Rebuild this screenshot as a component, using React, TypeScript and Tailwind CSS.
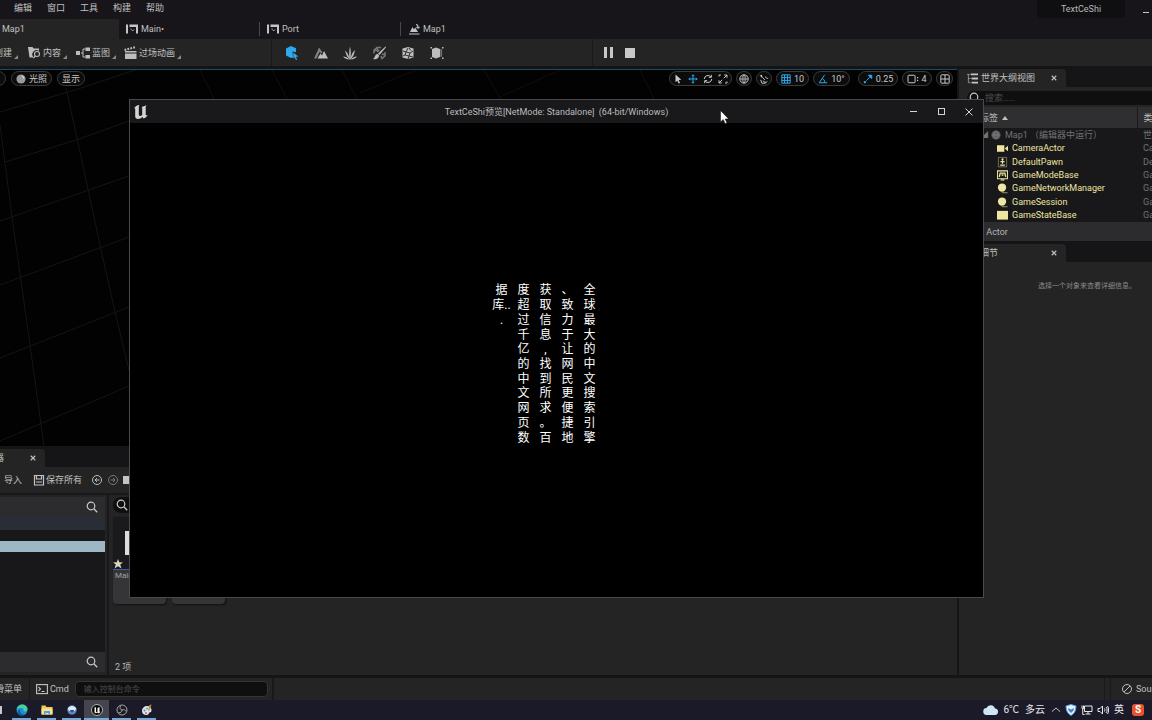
import React from "react";

const cx = (...parts: (string | false | undefined)[]) => parts.filter(Boolean).join(" ");

type SvgProps = { size?: string; box?: string; className?: string; children: React.ReactNode };

function Svg({ size = "size-3", box = "0 0 24 24", className, children }: SvgProps) {
  return (
    <svg viewBox={box} className={cx(size, "shrink-0", className)} fill="none" stroke="currentColor" strokeWidth={2} aria-hidden="true">
      {children}
    </svg>
  );
}

const WidgetIcon = () => (
  <Svg box="0 0 12 12" className="text-[#c4c4c4]">
    <path d="M0 1.500h2v9H0zM3.500 1.500H12v2.500H3.500zM10 4h2v6.500h-2z" fill="currentColor" stroke="none" />
    <path d="M4.500 6h1M5.500 6.500l1.200 1.500L8 6.500" strokeWidth={1} opacity=".8" />
  </Svg>
);

const LevelIcon = () => (
  <Svg box="0 0 12 12" className="text-[#c4c4c4]">
    <path d="M2 9l2.500-5L6 6.500 7.200 4.500 10 9z" fill="currentColor" stroke="none" />
    <path d="M1 11h10.500M8 1.500c1.500 0 2 1 2 2.500M8.500 4l1.500 1.200L11.500 4" strokeWidth={1.100} />
  </Svg>
);

const SearchIcon = ({ className }: { className?: string }) => (
  <Svg box="0 0 12 12" className={cx("text-[#c8c8c8]", className)}>
    <circle cx="5" cy="5" r="3.800" strokeWidth={1.200} />
    <path d="M7.800 7.800L11.200 11.200" strokeWidth={1.300} />
  </Svg>
);

const CloseIcon = ({ size = "size-[6px]" }: { size?: string }) => (
  <Svg box="0 0 8 8" size={size}>
    <path d="M1 1l6 6M7 1L1 7" strokeWidth={1.500} />
  </Svg>
);

const UnrealGlyph = ({ size }: { size: string }) => (
  <Svg box="0 0 16 16" size={size}>
    <path
      d="M1 4.500C2 2.500 4 1.200 6.500 1 5.900 1.600 5.800 2.200 5.800 3v7.600c0 .9.500 1.400 1.200 1.400.8 0 1.600-.5 2.200-1.100V4.200c0-.7-.3-.9-.9-1 1.500-.5 3.500-1 5.200-2.200-.6.9-.8 1.600-.8 2.600v7.200c0 .6.500.7 1.900.1-.8 1.700-2.300 3-4 3.500L9.300 12.900c-1 1.200-2.400 2-4.300 2-1.800 0-2.800-1-2.800-2.700V4.700c0-.6-.4-.7-1.200-.2z"
      fill="currentColor"
      stroke="none"
    />
  </Svg>
);

const Corner = () => (
  <Svg box="0 0 4 4" size="size-1" className="mt-2 text-[#8a8a8a]">
    <path d="M4 0v4H0z" fill="currentColor" stroke="none" />
  </Svg>
);

function TopMenu() {
  return (
    <header className="flex h-[19px] items-start justify-between bg-[#17151a]">
      <nav className="flex h-4 items-center gap-[15px] pl-[14px]">
        {["编辑", "窗口", "工具", "构建", "帮助"].map((m) => (
          <button key={m}>{m}</button>
        ))}
      </nav>
      <div className="flex items-start">
        <div className="flex h-[18px] w-[88px] items-center justify-center rounded-b bg-[#0f0f11] text-[#b8b8b8]">TextCeShi</div>
        <button aria-label="最小化" className="ml-[18px] flex h-6 w-[9px] items-center">
          <span className="h-px w-[6px] bg-[#c8c8c8]" />
        </button>
      </div>
    </header>
  );
}

function AssetTabs() {
  return (
    <div className="flex h-5 bg-[#17151a]">
      <button className="flex w-[119px] items-center bg-[#242424] pl-[2px]">Map1</button>
      {[
        { label: "Main", icon: <WidgetIcon />, dirty: true },
        { label: "Port", icon: <WidgetIcon />, dirty: false },
        { label: "Map1", icon: <LevelIcon />, dirty: false },
      ].map((t, i) => (
        <div key={i} className="flex items-center">
          <button className="flex w-[141px] items-center gap-[3px] pl-[7px]">
            {t.icon}
            <span>
              {t.label}
              {t.dirty && "•"}
            </span>
          </button>
          {i < 2 && <span className="-ml-px h-[14px] w-px bg-[#4a484d]" />}
        </div>
      ))}
    </div>
  );
}

const contentIcon = (
  <Svg box="0 0 13 13" size="size-[13px]" className="text-[#bdbdbd]">
    <path d="M0 1h4.500l1.200 1.500H11V5a4 4 0 0 0-5 6.500H1.500z" fill="currentColor" stroke="none" />
    <circle cx="9" cy="8" r="2.500" strokeWidth={1.100} />
    <path d="M7.300 9.900L5.500 12.200" strokeWidth={1.200} />
  </Svg>
);

const blueprintIcon = (
  <Svg box="0 0 14 12" size="h-3 w-[14px]" className="text-[#bdbdbd]">
    <path d="M0 4h4v4H0zM9.500.5H14V4H9.500zM9.500 8H14v3.500H9.500z" fill="currentColor" stroke="none" />
    <path d="M9.500 2H7v8h2.500M5 6h2" strokeWidth={1} />
  </Svg>
);

const clapperIcon = (
  <Svg box="0 0 13 13" size="size-[13px]" className="text-[#bdbdbd]">
    <path d="M1 5h11.500v1.500H1zM1 7.500h11.500V13H1z" fill="currentColor" stroke="none" />
    <path d="M0.500 4L12 1" strokeWidth={2} strokeDasharray="1.800 1.200" />
  </Svg>
);

const modeIcons: { name: string; active?: boolean; icon: React.ReactNode }[] = [
  {
    name: "选择",
    active: true,
    icon: (
      <g stroke="none" fill="currentColor">
        <path d="M6 0l5 2.200v4L7.500 5.500l.5 6L6 12 1 9.500v-7z" />
        <path d="M8.300 6.500l5 4-2.400.3 1.300 2.600-1.300.6-1.200-2.700-1.400 1.500z" />
      </g>
    ),
  },
  {
    name: "地形",
    icon: (
      <g stroke="none" fill="currentColor">
        <path d="M0 12.500L5 1.500l3.500 5-1 1-2-1.500-3 6.500z" opacity=".6" />
        <path d="M3.500 12.500L6.500 7.500l1.500 2L10 5l4 7.500z" />
      </g>
    ),
  },
  {
    name: "植被",
    icon: (
      <path
        d="M6.500 13.500C6 9 6 5 7 0.500 8 5 8 9 7.500 13.500zM6.500 13.500C6 9.500 4.500 6.500 2 4.500c1 3.500 2 6.500 4.500 9zM7.500 13.500C8 9.500 9.500 6 12 4c-.5 3.500-2 7-4.500 9.500zM6 13.500C4.500 11.500 2.500 10.500 0 10.500c1.500 1.800 3.500 2.800 6 3zM8 13.500c1.500-2 3.500-3 6-3-1.500 1.800-3.500 2.800-6 3z"
        fill="currentColor"
        stroke="none"
      />
    ),
  },
  {
    name: "网格体绘制",
    icon: (
      <g>
        <path d="M2 7.500V4l3-2.500h4M2.500 4.500h5M5 1.500L6 6M9 10l1 2.500L13 10V6M10 8l3 1" strokeWidth={1.500} opacity=".55" />
        <path d="M13.500.5L14 1.200 7.500 9 6 7.500z" fill="currentColor" stroke="none" />
        <path d="M5.500 7.800L7.200 9.500c-.5 3-3 4.200-6.200 3.500C3.200 12 2.500 8.500 5.500 7.800z" fill="currentColor" stroke="none" />
      </g>
    ),
  },
  {
    name: "破裂",
    icon: (
      <g>
        <path d="M1.500 2.500L7 1l5.500 1.500v9L7 13l-5.500-1.500z" fill="currentColor" stroke="none" />
        <path d="M2 5l3 1 2-4M5 6l-1 3-2 1M5 6l4 1 3-2M9 7l-1 3 4 1M4 9l4 1-1 3M8 2l2 2.500" stroke="#242424" strokeWidth={0.900} />
      </g>
    ),
  },
  {
    name: "笔刷编辑",
    icon: (
      <g>
        <path d="M2 3l4-1.500L10 3v8l-4 1.500L2 11z" fill="currentColor" stroke="none" />
        <path d="M11.200 3.200v7.600" strokeWidth={1.800} opacity=".5" />
        <path d="M.5 1H2v1.500H.5zM12 1h1.500v1.500H12zM.5 11.500H2V13H.5zM12 11.500h1.500V13H12z" fill="currentColor" stroke="none" />
      </g>
    ),
  },
];

function Toolbar() {
  return (
    <div className="flex h-[27px] bg-[#242424]">
      <div className="flex w-[272px] items-center border-r border-[#19191b]">
        <button className="-ml-[6px] flex items-center gap-[2px]">
          创建
          <Corner />
        </button>
        <button className="ml-[10px] flex items-center gap-[2px]">
          {contentIcon}
          内容
          <Corner />
        </button>
        <button className="ml-[9px] flex items-center gap-[2px]">
          {blueprintIcon}
          蓝图
          <Corner />
        </button>
        <button className="ml-[8px] flex items-center gap-[2px]">
          {clapperIcon}
          过场动画
          <Corner />
        </button>
      </div>
      <div className="flex w-[321px] items-center gap-[15px] border-r border-[#19191b] pl-[13px]">
        {modeIcons.map((m) => (
          <button key={m.name} aria-label={m.name} className={m.active ? "text-[#2fa8f0]" : "text-[#bdbdbd]"}>
            <Svg box="0 0 14 14" size="size-[14px]">
              {m.icon}
            </Svg>
          </button>
        ))}
      </div>
      <div className="flex items-center gap-3 pl-[11px] text-[#c8c8c8]">
        <button aria-label="暂停" className="flex w-[9px] justify-between">
          <span className="h-[11px] w-[3px] bg-current" />
          <span className="h-[11px] w-[3px] bg-current" />
        </button>
        <button aria-label="停止" className="size-[10px] bg-current" />
      </div>
    </div>
  );
}

function Pill({ className, label, children }: { className?: string; label?: string; children: React.ReactNode }) {
  return (
    <button
      aria-label={label}
      className={cx("flex h-[15px] items-center justify-center rounded-full border border-[#3c3c3c] bg-[#0c0c0c] text-[#c8c8c8]", className)}
    >
      {children}
    </button>
  );
}

const Small = ({ className, children }: { className?: string; children: React.ReactNode }) => (
  <Svg box="0 0 12 12" size="size-[10px]" className={className}>
    <g strokeWidth={1.200}>{children}</g>
  </Svg>
);

function ViewportBar() {
  return (
    <div className="relative flex items-center justify-between pr-1 pt-px">
      <div className="flex items-center gap-[5px]">
        <Pill className="-ml-[15px] w-[21px]" label="透视">
          {""}
        </Pill>
        <Pill className="w-[41px] gap-[3px]">
          <Small>
            <circle cx="6" cy="6" r="5.500" fill="#9a9a9a" stroke="none" />
            <path d="M7 2.500a3 3 0 0 1 2.500 3" stroke="#e6e6e6" />
          </Small>
          光照
        </Pill>
        <Pill className="w-[28px]">显示</Pill>
      </div>
      <div className="flex items-center gap-1">
        <div className="flex h-[15px] w-[63px] items-center justify-between rounded-full border border-[#3c3c3c] bg-[#0c0c0c] px-[3px] text-[#c8c8c8]">
          <button aria-label="选择">
            <Small>
              <path d="M3 .5l7 6.500-3.200.3 1.700 3.400-1.800.8L5.200 8 3 10z" fill="currentColor" stroke="none" />
            </Small>
          </button>
          <button aria-label="移动" className="text-[#2fa8f0]">
            <Small>
              <path d="M6 1v10M1 6h10M4.500 2.500L6 1l1.500 1.500M4.500 9.500L6 11l1.500-1.500M2.500 4.500L1 6l1.500 1.500M9.500 4.500L11 6 9.500 7.500" />
            </Small>
          </button>
          <button aria-label="旋转">
            <Small>
              <path d="M1.500 6A4.500 4.500 0 0 1 9.500 3.500M10.500 6a4.500 4.500 0 0 1-8 2.500M10 1v3H7M2 11V8h3" />
            </Small>
          </button>
          <button aria-label="缩放">
            <Small>
              <path d="M7.500 1.200h3.300V4.500M10.800 1.200L7 5M4.500 10.800H1.200V7.500M1.200 10.800L5 7M1.200 3V1.200H3.500M10.800 9v1.800H8.500" />
            </Small>
          </button>
        </div>
        <Pill className="w-4" label="世界坐标">
          <Small>
            <circle cx="6" cy="6" r="5" />
            <path d="M1 6h10M6 1v10M6 1C3 3 3 9 6 11M6 1c3 2 3 8 0 10" strokeWidth={0.900} />
          </Small>
        </Pill>
        <Pill className="w-4" label="表面对齐">
          <Small>
            <path d="M1 2l3 1M3 1v3M4 4l3 3M5 8a3 3 0 0 0 5 1M8 3a2 2 0 0 0 3 2M2 7l1.500 4H8" />
          </Small>
        </Pill>
        <Pill className="w-[33px] gap-[3px]">
          <Small className="text-[#2fa8f0]">
            <path d="M1 1h10v10H1zM4.300 1v10M7.700 1v10M1 4.300h10M1 7.700h10" />
          </Small>
          10
        </Pill>
        <Pill className="w-[37px] gap-[3px]">
          <Small className="text-[#2fa8f0]">
            <path d="M8 1L1.500 10.500H11M5 5.500c2 .5 3.200 2.500 3.200 5" />
          </Small>
          10°
        </Pill>
        <Pill className="ml-1 w-10 gap-[3px]">
          <Small className="text-[#2fa8f0]">
            <path d="M4 8l4-4M6.500 1.500h4v4z" fill="currentColor" />
            <path d="M1 8.500h2.500V11H1z" fill="currentColor" stroke="none" />
          </Small>
          0.25
        </Pill>
        <Pill className="w-[30px] gap-[2px]">
          <Svg box="0 0 14 12" size="h-[10px] w-3">
            <rect x="1" y="1.500" width="8.500" height="9" rx="1" strokeWidth={1.200} />
            <path d="M12.500 3.500v1.500M12.500 7v1.500" strokeWidth={1.500} />
          </Svg>
          4
        </Pill>
        <Pill className="w-[17px]" label="布局">
          <Small>
            <rect x="1" y="1" width="10" height="10" rx="1" />
            <path d="M6 1v10M1 6h10" />
          </Small>
        </Pill>
      </div>
    </div>
  );
}

function Viewport() {
  return (
    <section className="relative min-h-0 flex-1 overflow-hidden border-t border-[#1d4a60] bg-[#020202]">
      <svg className="absolute inset-0 size-full" viewBox="0 70 957 376" preserveAspectRatio="xMinYMin slice" fill="none" stroke="#151515" aria-hidden="true">
        <path d="M0 125L12 217 30 345 44 446M66 88L77 138 100 245 115 312 129 370M0 112L75 90 135 70M5 162L76 140 129 121M0 221L129 176M0 285L129 237M0 358L129 307M0 441L129 386" />
        <path d="M200 70l14 29M272 70l15 29M342 70l15 29M360 93l56-23M484 70l17 29M500 97l60-27M640 70l14 29" stroke="#120f0c" />
      </svg>
      <ViewportBar />
    </section>
  );
}

function PanelTab({ className, children }: { className?: string; children: React.ReactNode }) {
  return (
    <div className="flex h-[18px] shrink-0 bg-[#151518]">
      <div className={cx("flex items-center rounded-tr bg-[#242424]", className)}>{children}</div>
    </div>
  );
}

function ContentBrowser() {
  return (
    <section className="flex h-[229px] flex-col border-t-3 border-[#151518] bg-[#242424]">
      <PanelTab className="w-[45px] justify-between pr-[9px]">
        <span className="-ml-[5px]">器</span>
        <button aria-label="关闭">
          <CloseIcon />
        </button>
      </PanelTab>
      <div className="flex h-[26px] shrink-0 items-center">
        <button className="-ml-[9px] flex items-center gap-[3px]">
          <Svg size="size-[10px]">
            <path d="M12 3v12M20 4v16H4V4" />
          </Svg>
          导入
        </button>
        <button className="ml-[11px] flex items-center gap-px">
          <Svg box="0 0 12 12" className="text-[#c4c4c4]">
            <path d="M1.500 1.500h9v9.500h-9zM3.500 1.500V5h5V1.500M3 8h6" strokeWidth={1.200} />
          </Svg>
          保存所有
        </button>
        <button aria-label="后退" className="ml-[9px]">
          <Svg size="size-3">
            <circle cx="12" cy="12" r="9" />
            <path d="M17 12H8M12 8l-4 4 4 4" />
          </Svg>
        </button>
        <button aria-label="前进" className="ml-1 text-[#777777]">
          <Svg size="size-3">
            <circle cx="12" cy="12" r="9" />
            <path d="M7 12h9M12 8l4 4-4 4" />
          </Svg>
        </button>
        <button aria-label="路径" className="ml-1 h-2 w-[10px] bg-[#c4c4c4]" />
      </div>
      <div className="flex min-h-0 flex-1 border-t-2 border-[#19191b]">
        <div className="mb-[3px] mt-[2px] flex w-[105px] shrink-0 flex-col bg-[#18181a]">
          <div className="flex h-5 items-center justify-end bg-[#2c2c2e] pr-[7px]">
            <button aria-label="搜索文件夹">
              <SearchIcon />
            </button>
          </div>
          <div className="h-[13px] bg-[#292d36]" />
          <div className="mt-[11px] h-[11px] bg-[#9db8c4]" />
          <div className="flex-1" />
          <div className="flex h-5 items-center justify-end bg-[#2c2c2e] pr-[7px]">
            <button aria-label="搜索合集">
              <SearchIcon />
            </button>
          </div>
        </div>
        <div className="ml-[2px] flex min-w-0 flex-1 flex-col border-l-2 border-[#19191b] pl-1 pr-2">
          <label className="mt-[2px] flex h-4 items-center gap-1 rounded-full bg-[#0f0f0f] pl-[3px]">
            <SearchIcon />
            <input aria-label="搜索资产" className="min-w-0 flex-1 bg-transparent outline-none" />
          </label>
          <div className="mt-1 flex gap-[6px]">
            <Tile name="Main" />
            <Tile name="Port" />
          </div>
          <div className="flex flex-1 items-end pb-[2px] pl-[2px] text-[#b4b4b4]">2 项</div>
        </div>
      </div>
    </section>
  );
}

function Tile({ name }: { name: string }) {
  return (
    <div className="h-[87px] w-[53px] overflow-hidden rounded-b bg-[#353537] shadow-[1px_1px_2px_#111111]">
      <div className="flex h-[53px] items-end border-b border-[#3c5ba8] bg-[#1a1a1c]">
        <Svg box="0 0 10 10" size="size-[10px]" className="text-[#d8d4c0]">
          <path d="M5 0l1.300 3.200L10 3.500 7.200 5.600 8.500 9.500 5 7.300 1.500 9.500 2.800 5.600 0 3.500l3.700-.3z" fill="currentColor" stroke="none" />
        </Svg>
        <span className="mb-[14px] ml-[2px] h-6 w-8 bg-[#dcdcdc]" />
      </div>
      <div className="pl-[2px] text-[8px] text-[#a0a0a0]">{name}</div>
    </div>
  );
}

const Yellow = ({ children }: { children: React.ReactNode }) => (
  <Svg box="0 0 12 12" size="h-3 w-[11px]" className="text-[#efe6a2]">
    {children}
  </Svg>
);

const sphere = (
  <Yellow>
    <path d="M5 10.500h6.500v1.200H5z" fill="#8a8668" stroke="none" />
    <circle cx="5.500" cy="5.500" r="4.500" fill="currentColor" stroke="none" />
  </Yellow>
);

const actors: { name: string; type: string; icon: React.ReactNode }[] = [
  {
    name: "CameraActor",
    type: "CameraActor",
    icon: (
      <Yellow>
        <path d="M0 3h8v7H0zM8.500 6.500L12 3.500v6z" fill="currentColor" stroke="none" />
      </Yellow>
    ),
  },
  {
    name: "DefaultPawn",
    type: "DefaultPawn",
    icon: (
      <Yellow>
        <path d="M1.500 1h9v10.300h-9z" strokeWidth={1} opacity=".45" />
        <circle cx="6" cy="3" r="1.200" fill="currentColor" stroke="none" />
        <path d="M3.800 5.500h4.400M6 4v4M3.500 9.500h5" strokeWidth={1.300} />
      </Yellow>
    ),
  },
  {
    name: "GameModeBase",
    type: "GameModeBase",
    icon: (
      <Yellow>
        <path d="M.6 1.500h10.800v8.500H.6zM4 11.500h4" strokeWidth={1.100} />
        <path d="M2.500 8l1-4h5l1 4M5 6h2" strokeWidth={1.500} />
      </Yellow>
    ),
  },
  { name: "GameNetworkManager", type: "GameNetworkManager", icon: sphere },
  { name: "GameSession", type: "GameSession", icon: sphere },
  {
    name: "GameStateBase",
    type: "GameStateBase",
    icon: (
      <Yellow>
        <path d="M0 1.500h12v9.500H0z" fill="currentColor" stroke="none" />
      </Yellow>
    ),
  },
];

function Outliner() {
  return (
    <section className="flex flex-col overflow-hidden bg-[#242424]">
      <PanelTab className="w-[107px] pl-2">
        <Svg box="0 0 12 12" size="size-[11px]" className="mr-[3px] text-[#c4c4c4]">
          <path d="M0 1.500h3M1.500 1.500V10.500M1.500 6H4M1.500 10.500H4" strokeWidth={1} opacity=".7" />
          <path d="M4 1.500h8M5 6h7M5 10.500h7" strokeWidth={2} />
        </Svg>
        世界大纲视图
        <button aria-label="关闭" className="ml-auto mr-[9px]">
          <CloseIcon />
        </button>
      </PanelTab>
      <label className="mb-[2px] ml-2 mt-1 flex h-[14px] items-center gap-1 rounded-l-full bg-[#0f0f0f] pl-[2px]">
        <SearchIcon />
        <input placeholder="搜索……" aria-label="搜索" className="min-w-0 flex-1 bg-transparent outline-none placeholder:text-[#4c4c4c]" />
      </label>
      <table className="h-[115px] w-[calc(100%+50px)] table-fixed border-collapse bg-[#18181a] text-left">
        <thead>
          <tr className="h-[21px] bg-[#2f2f31]">
            <th className="border-r border-[#19191b] p-0 font-normal">
              <span className="flex items-center gap-1 pl-[21px]">
                标签
                <Svg box="0 0 6 4" size="h-1 w-[6px]">
                  <path d="M3 0l3 4H0z" fill="currentColor" stroke="none" />
                </Svg>
              </span>
            </th>
            <th className="w-[65px] p-0 pl-[6px] font-normal">类型</th>
          </tr>
        </thead>
        <tbody>
          <tr className="text-[#727272]">
            <td className="p-0">
              <span className="flex items-center gap-1 pl-[22px]">
                <span className="-mr-px text-[7px]">◢</span>
                <Svg box="0 0 12 12" size="size-[10px]">
                  <circle cx="6" cy="6" r="5.500" fill="#5e5e5e" stroke="none" />
                  <path d="M1 6h10M6 1c-3 3-3 7 0 10M6 1c3 3 3 7 0 10" stroke="#808080" strokeWidth={0.900} />
                </Svg>
                <span className="whitespace-nowrap">Map1 （编辑器中运行）</span>
              </span>
            </td>
            <td className="p-0 pl-[6px]">世界</td>
          </tr>
          {actors.map((a) => (
            <tr key={a.name}>
              <td className="p-0">
                <span className="flex items-center gap-1 pl-[38px] text-[#efe6a2]">
                  {a.icon}
                  {a.name}
                </span>
              </td>
              <td className="overflow-hidden p-0 pl-[6px] text-[#727272]">{a.type}</td>
            </tr>
          ))}
        </tbody>
      </table>
      <div className="flex h-[19px] items-center bg-[#2c2c2e] pl-5 text-[#b4b4b4]">7 Actor</div>
    </section>
  );
}

function Details() {
  return (
    <section className="flex flex-1 flex-col overflow-hidden border-t-3 border-[#151518] bg-[#242424]">
      <PanelTab className="w-[107px] pl-[21px]">
        细节
        <button aria-label="关闭" className="ml-auto mr-[9px]">
          <CloseIcon />
        </button>
      </PanelTab>
      <p className="whitespace-nowrap pl-[79px] pt-[18px] text-[7px] text-[#8a8a8a]">选择一个对象来查看详细信息。</p>
    </section>
  );
}

function StatusBar() {
  return (
    <footer className="flex h-[25px] items-center border-t-3 border-[#151518] bg-[#242424]">
      <button className="-ml-[5px] w-[34px] whitespace-nowrap text-left">滑菜单</button>
      <label className="flex h-full items-center gap-[2px] border-l border-[#19191b] pl-[6px]" htmlFor="cmd">
        <Svg box="0 0 12 12" className="text-[#c4c4c4]">
          <rect x=".6" y="1.600" width="10.800" height="9" strokeWidth={1.100} />
          <path d="M2.500 4l2 2-2 2M5.500 8.500h3" strokeWidth={1.100} />
        </Svg>
        Cmd
      </label>
      <input
        id="cmd"
        placeholder="输入控制台命令"
        className="ml-[6px] mr-[4px] h-4 w-[193px] rounded-sm border border-[#343434] bg-[#0f0f0f] px-2 text-[8px] outline-none placeholder:text-[#4c4c4c]"
      />
      <span className="h-full w-[2px] bg-[#19191b]" />
      <span className="ml-auto h-full w-[7px] border-x border-[#19191b]" />
      <button className="ml-[10px] flex w-[31px] items-center gap-[3px] overflow-hidden">
        <Svg size="size-3">
          <circle cx="12" cy="12" r="9" />
          <path d="M18 6L6 18" />
        </Svg>
        Source
      </button>
    </footer>
  );
}

const apps: { name: string; active?: boolean; icon: React.ReactNode }[] = [
  {
    name: "Edge",
    icon: (
      <g stroke="none">
        <circle cx="12" cy="12" r="11" fill="#1e8fd8" />
        <path d="M1 11C2 5 7 1 12 1c6 0 11 4 11 9 0 3-2 5-5 5-2 0-3-1-3-2 1-3-1-5-4-5C6 8 3 9 1 11z" fill="#48cf9b" />
        <path d="M8 14c0 5 5 8 11 6-3 3-8 4-12 2C2 19 3 13 9 10c-1 1-1 2-1 4z" fill="#155a9c" />
      </g>
    ),
  },
  {
    name: "文件资源管理器",
    icon: (
      <g stroke="none">
        <path d="M1 3h8l2 3h12v15H1z" fill="#f2c94f" />
        <path d="M1 9h22v12H1z" fill="#fbe192" />
        <path d="M6 14h12v7h-3v-3H9v3H6z" fill="#4ba3e3" />
      </g>
    ),
  },
  {
    name: "浏览器",
    icon: (
      <g stroke="none">
        <circle cx="12" cy="12" r="9.500" fill="#5a86c4" />
        <path d="M3.500 9c4-7 13-7 17 0l-3 5H6z" fill="#dfeaf6" />
        <path d="M8 12h8c0 5-8 5-8 0z" fill="#2c4a7c" />
      </g>
    ),
  },
  {
    name: "Unreal Editor",
    active: true,
    icon: (
      <g>
        <circle cx="12" cy="12" r="11" fill="#0a0a0a" stroke="#dcdcdc" strokeWidth={1.500} />
        <path d="M6 8l4-2v9c0 2 3 2 3 0V8l4-2v9l2 1-4 3-2-2c-2 2-6 2-6-1V8z" fill="#f4f4f4" stroke="none" />
      </g>
    ),
  },
  {
    name: "OBS",
    icon: (
      <g>
        <circle cx="12" cy="12" r="10" fill="#1c1c20" stroke="#a4a4a8" />
        <path d="M12 12C8 11 7 7 9 4M12 12c4-2 7 0 8 3M12 12c0 4-3 6-7 5" stroke="#a4a4a8" />
      </g>
    ),
  },
  {
    name: "画图",
    icon: (
      <g stroke="none">
        <path d="M2 14c0-6 5-10 10-10 6 0 9 4 9 9 0 4-4 3-5 5s-1 4-5 4c-5 0-9-3-9-8z" fill="#dbe6ec" />
        <circle cx="7" cy="13" r="2" fill="#3f8fd0" />
        <circle cx="12" cy="9" r="2" fill="#5cb45c" />
        <path d="M17 2l4-1-4 12-3 1z" fill="#c98a44" />
        <circle cx="10" cy="18" r="1.800" fill="#d84f3f" />
      </g>
    ),
  },
];

function Taskbar() {
  return (
    <footer className="flex h-5 items-stretch justify-between bg-[#1b1a28] text-[10px] text-[#e8e8e8]">
      <div className="flex">
        <button aria-label="任务视图" className="mr-[7px] flex w-[2px] items-center">
          <span className="h-2 w-[2px] bg-[#c8c8c8]" />
        </button>
        {apps.map((a) => (
          <button key={a.name} aria-label={a.name} className={cx("flex w-[25px] flex-col items-center justify-between pt-[4px]", a.active && "bg-[#45454f]")}>
            <Svg>{a.icon}</Svg>
            <span className={cx("h-[2px] bg-[#76a9d6]", a.active ? "w-full" : "w-[19px]")} />
          </button>
        ))}
      </div>
      <div className="flex items-center gap-[4px] pr-2">
        <Svg box="0 0 16 12" size="h-3 w-4">
          <path d="M4 11a3.500 3.500 0 0 1-.5-7A4.500 4.500 0 0 1 12 4.500 3.300 3.300 0 0 1 12.500 11z" fill="#cfe6f7" stroke="none" />
        </Svg>
        <span>6℃</span>
        <span className="ml-[2px]">多云</span>
        <button aria-label="显示隐藏的图标" className="ml-[2px]">
          <Svg size="size-[10px]">
            <path d="M2 16L12 7l10 9" />
          </Svg>
        </button>
        <Svg size="size-3">
          <path d="M2 4l10-3 10 3c0 9-3 15-10 19C5 19 2 13 2 4z" fill="#e8f2fb" stroke="#5b9bdc" />
          <path d="M6 8l6 3 6-3-1 5-5 5-5-5z" fill="#3f82d0" stroke="none" />
        </Svg>
        <Svg size="size-3">
          <path d="M7 4h15v11H7zM14 15v5M9 20h10M2 3v6h3V3M3.500 9v12H7" />
        </Svg>
        <Svg size="size-3">
          <path d="M2 9h4l5-5v16l-5-5H2zM15 9c1 2 1 4 0 6M18 6c3 4 3 8 0 12M21 4c3 5 3 11 0 16" />
        </Svg>
        <button className="ml-px">英</button>
        <span className="ml-1 flex size-3 items-center justify-center rounded-[3px] bg-[#e8532a] text-[10px] font-bold leading-none text-white">S</span>
      </div>
    </footer>
  );
}

const columns: string[][] = [
  ["据", "库..", "."],
  [..."度超过千亿的中文网页数"],
  [..."获取信息,找到所求。百"],
  [..."、致力于让网民更便捷地"],
  [..."全球最大的中文搜索引擎"],
];

function GameWindow() {
  return (
    <div className="absolute bottom-[122px] left-[129px] right-[168px] top-[99px] flex flex-col border border-[#4a4a4c] bg-black" role="dialog" aria-label="TextCeShi">
      <div className="grid h-[23px] shrink-0 grid-cols-[1fr_auto_1fr] items-center bg-[#19191b]">
        <div className="pl-[3px] text-[#d4d4d4]">
          <UnrealGlyph size="size-4" />
        </div>
        <div className="whitespace-pre text-[#bcbcbc]">TextCeShi预览[NetMode: Standalone]  (64-bit/Windows)</div>
        <div className="flex justify-end text-[#d4d4d4]">
          <button aria-label="最小化" className="flex h-[23px] w-7 items-center justify-center">
            <span className="h-px w-[7px] bg-current" />
          </button>
          <button aria-label="最大化" className="flex h-[23px] w-7 items-center justify-center">
            <span className="size-[7px] border border-current" />
          </button>
          <button aria-label="关闭" className="flex h-[23px] w-7 items-center justify-center">
            <Svg box="0 0 8 8" size="size-2">
              <path d="M.5.5l7 7M7.500.5l-7 7" strokeWidth={1} />
            </Svg>
          </button>
        </div>
      </div>
      <div className="flex flex-1 items-center justify-center pr-[22px] pt-2">
        <div className="flex h-[162px] text-[12px] leading-none text-white">
          {columns.map((col, i) => (
            <div key={i} className="grid w-[22px] grid-rows-11 text-center">
              {col.map((ch, j) => (
                <span key={j} className="flex items-center justify-center">
                  {ch}
                </span>
              ))}
            </div>
          ))}
        </div>
      </div>
    </div>
  );
}

export default function App() {
  return (
    <div
      lang="zh-CN"
      className="relative flex h-screen flex-col overflow-hidden bg-[#151518] font-[Roboto,'Noto_Sans_CJK_SC',sans-serif] text-[9px] leading-[12px] text-[#c0c0c0]"
    >
      <TopMenu />
      <AssetTabs />
      <Toolbar />
      <main className="mt-[3px] flex min-h-0 flex-1">
        <div className="flex min-w-0 flex-1 flex-col">
          <Viewport />
          <ContentBrowser />
        </div>
        <div className="ml-[2px] flex w-[193px] flex-col">
          <Outliner />
          <Details />
        </div>
      </main>
      <StatusBar />
      <Taskbar />
      <GameWindow />
      <svg viewBox="0 0 9 14" className="absolute left-[720px] top-[110px] h-[14px] w-[9px]" aria-hidden="true">
        <path d="M.5.500v11.500l2.700-2.500 2 4.200 1.800-.8L5.200 9H8.700z" fill="#fff" stroke="#000" strokeWidth=".5" />
      </svg>
    </div>
  );
}
